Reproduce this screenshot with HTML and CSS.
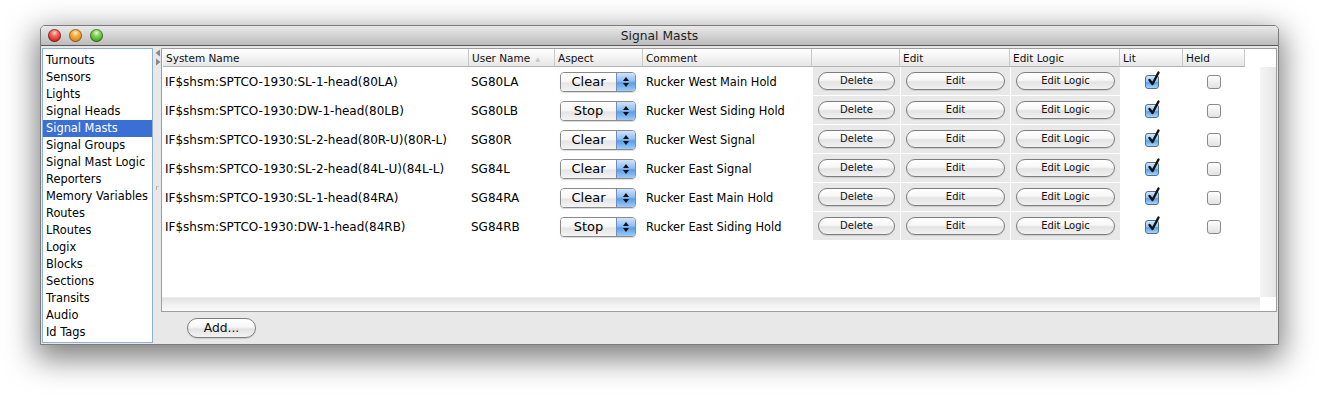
FILE: index.html
```html
<!DOCTYPE html>
<html>
<head>
<meta charset="utf-8">
<title>Signal Masts</title>
<link rel="stylesheet" href="styles.css">
</head>
<body>
<div class="page">
  <div class="window">
    <div class="titlebar">
      <div class="lights">
        <span class="light red"></span>
        <span class="light yellow"></span>
        <span class="light green"></span>
      </div>
      <div class="title">Signal Masts</div>
      <div></div>
    </div>
    <div class="content">
      <ul class="navlist">
        <li>Turnouts</li>
        <li>Sensors</li>
        <li>Lights</li>
        <li>Signal Heads</li>
        <li class="selected">Signal Masts</li>
        <li>Signal Groups</li>
        <li>Signal Mast Logic</li>
        <li>Reporters</li>
        <li>Memory Variables</li>
        <li>Routes</li>
        <li>LRoutes</li>
        <li>Logix</li>
        <li>Blocks</li>
        <li>Sections</li>
        <li>Transits</li>
        <li>Audio</li>
        <li>Id Tags</li>
      </ul>
      <div class="splitter">
        <div class="arrows">
          <svg width="6" height="8" viewBox="0 0 6 8"><path d="M5 0.5 L0.5 4 L5 7.5 Z" fill="#8a8a8a"/></svg>
          <svg width="6" height="8" viewBox="0 0 6 8"><path d="M1 0.5 L5.5 4 L1 7.5 Z" fill="#8a8a8a"/></svg>
        </div>
        <div class="grip"></div>
      </div>
      <div class="mainpane">
        <div class="scrollbox">
          <div class="viewport">
            <div class="tablearea">
              <table class="grid">
                <colgroup>
                  <col class="c-sys"><col class="c-user"><col class="c-aspect"><col class="c-comment">
                  <col class="c-del"><col class="c-edit"><col class="c-logic"><col class="c-lit"><col class="c-held">
                </colgroup>
                <thead>
                  <tr>
                    <th>System Name</th>
                    <th>User Name <span class="sort">&#9650;</span></th>
                    <th>Aspect</th>
                    <th>Comment</th>
                    <th></th>
                    <th>Edit</th>
                    <th>Edit Logic</th>
                    <th>Lit</th>
                    <th>Held</th>
                  </tr>
                </thead>
                <tbody>
                  <tr>
                    <td class="sys">IF$shsm:SPTCO-1930:SL-1-head(80LA)</td>
                    <td class="user">SG80LA</td>
                    <td><div class="combo"><span class="combo-text">Clear</span><span class="combo-arrow"><svg width="8" height="12" viewBox="0 0 8 12"><path d="M4 1 L7 5 L1 5 Z M4 11 L7 7 L1 7 Z" fill="#111"/></svg></span></div></td>
                    <td class="comment">Rucker West Main Hold</td>
                    <td class="btncell"><span class="pill w-del">Delete</span></td>
                    <td class="btncell"><span class="pill w-edit">Edit</span></td>
                    <td class="btncell"><span class="pill w-edit">Edit Logic</span></td>
                    <td class="chk"><span class="cb on"><svg width="18" height="18" viewBox="0 0 18 18"><path d="M4.5 9 L7.5 13 L13.5 1.5" fill="none" stroke="#111" stroke-width="2.4" stroke-linecap="round" stroke-linejoin="round"/></svg></span></td>
                    <td class="chk"><span class="cb"></span></td>
                  </tr>
                  <tr>
                    <td class="sys">IF$shsm:SPTCO-1930:DW-1-head(80LB)</td>
                    <td class="user">SG80LB</td>
                    <td><div class="combo"><span class="combo-text">Stop</span><span class="combo-arrow"><svg width="8" height="12" viewBox="0 0 8 12"><path d="M4 1 L7 5 L1 5 Z M4 11 L7 7 L1 7 Z" fill="#111"/></svg></span></div></td>
                    <td class="comment">Rucker West Siding Hold</td>
                    <td class="btncell"><span class="pill w-del">Delete</span></td>
                    <td class="btncell"><span class="pill w-edit">Edit</span></td>
                    <td class="btncell"><span class="pill w-edit">Edit Logic</span></td>
                    <td class="chk"><span class="cb on"><svg width="18" height="18" viewBox="0 0 18 18"><path d="M4.5 9 L7.5 13 L13.5 1.5" fill="none" stroke="#111" stroke-width="2.4" stroke-linecap="round" stroke-linejoin="round"/></svg></span></td>
                    <td class="chk"><span class="cb"></span></td>
                  </tr>
                  <tr>
                    <td class="sys">IF$shsm:SPTCO-1930:SL-2-head(80R-U)(80R-L)</td>
                    <td class="user">SG80R</td>
                    <td><div class="combo"><span class="combo-text">Clear</span><span class="combo-arrow"><svg width="8" height="12" viewBox="0 0 8 12"><path d="M4 1 L7 5 L1 5 Z M4 11 L7 7 L1 7 Z" fill="#111"/></svg></span></div></td>
                    <td class="comment">Rucker West Signal</td>
                    <td class="btncell"><span class="pill w-del">Delete</span></td>
                    <td class="btncell"><span class="pill w-edit">Edit</span></td>
                    <td class="btncell"><span class="pill w-edit">Edit Logic</span></td>
                    <td class="chk"><span class="cb on"><svg width="18" height="18" viewBox="0 0 18 18"><path d="M4.5 9 L7.5 13 L13.5 1.5" fill="none" stroke="#111" stroke-width="2.4" stroke-linecap="round" stroke-linejoin="round"/></svg></span></td>
                    <td class="chk"><span class="cb"></span></td>
                  </tr>
                  <tr>
                    <td class="sys">IF$shsm:SPTCO-1930:SL-2-head(84L-U)(84L-L)</td>
                    <td class="user">SG84L</td>
                    <td><div class="combo"><span class="combo-text">Clear</span><span class="combo-arrow"><svg width="8" height="12" viewBox="0 0 8 12"><path d="M4 1 L7 5 L1 5 Z M4 11 L7 7 L1 7 Z" fill="#111"/></svg></span></div></td>
                    <td class="comment">Rucker East Signal</td>
                    <td class="btncell"><span class="pill w-del">Delete</span></td>
                    <td class="btncell"><span class="pill w-edit">Edit</span></td>
                    <td class="btncell"><span class="pill w-edit">Edit Logic</span></td>
                    <td class="chk"><span class="cb on"><svg width="18" height="18" viewBox="0 0 18 18"><path d="M4.5 9 L7.5 13 L13.5 1.5" fill="none" stroke="#111" stroke-width="2.4" stroke-linecap="round" stroke-linejoin="round"/></svg></span></td>
                    <td class="chk"><span class="cb"></span></td>
                  </tr>
                  <tr>
                    <td class="sys">IF$shsm:SPTCO-1930:SL-1-head(84RA)</td>
                    <td class="user">SG84RA</td>
                    <td><div class="combo"><span class="combo-text">Clear</span><span class="combo-arrow"><svg width="8" height="12" viewBox="0 0 8 12"><path d="M4 1 L7 5 L1 5 Z M4 11 L7 7 L1 7 Z" fill="#111"/></svg></span></div></td>
                    <td class="comment">Rucker East Main Hold</td>
                    <td class="btncell"><span class="pill w-del">Delete</span></td>
                    <td class="btncell"><span class="pill w-edit">Edit</span></td>
                    <td class="btncell"><span class="pill w-edit">Edit Logic</span></td>
                    <td class="chk"><span class="cb on"><svg width="18" height="18" viewBox="0 0 18 18"><path d="M4.5 9 L7.5 13 L13.5 1.5" fill="none" stroke="#111" stroke-width="2.4" stroke-linecap="round" stroke-linejoin="round"/></svg></span></td>
                    <td class="chk"><span class="cb"></span></td>
                  </tr>
                  <tr>
                    <td class="sys">IF$shsm:SPTCO-1930:DW-1-head(84RB)</td>
                    <td class="user">SG84RB</td>
                    <td><div class="combo"><span class="combo-text">Stop</span><span class="combo-arrow"><svg width="8" height="12" viewBox="0 0 8 12"><path d="M4 1 L7 5 L1 5 Z M4 11 L7 7 L1 7 Z" fill="#111"/></svg></span></div></td>
                    <td class="comment">Rucker East Siding Hold</td>
                    <td class="btncell"><span class="pill w-del">Delete</span></td>
                    <td class="btncell"><span class="pill w-edit">Edit</span></td>
                    <td class="btncell"><span class="pill w-edit">Edit Logic</span></td>
                    <td class="chk"><span class="cb on"><svg width="18" height="18" viewBox="0 0 18 18"><path d="M4.5 9 L7.5 13 L13.5 1.5" fill="none" stroke="#111" stroke-width="2.4" stroke-linecap="round" stroke-linejoin="round"/></svg></span></td>
                    <td class="chk"><span class="cb"></span></td>
                  </tr>
                </tbody>
              </table>
            </div>
            <div class="vgutter"></div>
          </div>
          <div class="hrow">
            <div class="hbar"></div>
            <div class="corner"></div>
          </div>
        </div>
        <div class="footer">
          <span class="pill addbtn">Add...</span>
        </div>
      </div>
    </div>
  </div>
</div>
</body>
</html>
```

FILE: styles.css
```css
* { box-sizing: border-box; }

html, body {
  margin: 0;
  background: #ffffff;
}

body {
  font-family: "DejaVu Sans", "Liberation Sans", sans-serif;
  color: #000;
}

.page {
  height: 400px;
  padding: 25px 0 0 40px;
  overflow: hidden;
}

.window {
  width: 1239px;
  height: 320px;
  border: 1px solid #7b7b7b;
  border-radius: 5px 5px 0 0;
  background: #e8e8e8;
  box-shadow: 0 10px 30px 4px rgba(0, 0, 0, 0.5);
  display: flex;
  flex-direction: column;
  overflow: hidden;
}

/* title bar */
.titlebar {
  height: 20px;
  flex: none;
  display: grid;
  grid-template-columns: 1fr auto 1fr;
  align-items: center;
  background: linear-gradient(#e9e9e9, #d3d3d3 50%, #bcbcbc);
  border-bottom: 1px solid #585858;
}

.lights {
  display: flex;
  gap: 8px;
  padding-left: 7px;
}

.light {
  width: 13px;
  height: 13px;
  border-radius: 50%;
  display: block;
  box-shadow: inset 0 0 0 1px rgba(0, 0, 0, 0.35);
}

.light.red {
  background: radial-gradient(circle at 50% 30%, #ffd1cc 0, #f2675c 30%, #c8241a 75%, #a3180f 100%);
}

.light.yellow {
  background: radial-gradient(circle at 50% 30%, #ffeec0 0, #f4b34a 30%, #d9821a 75%, #b7680d 100%);
}

.light.green {
  background: radial-gradient(circle at 50% 30%, #e0ffc8 0, #86d45e 30%, #3f9e24 75%, #2e7d17 100%);
}

.title {
  font-size: 12.3px;
  color: #1e1e1e;
  text-align: center;
  padding-top: 1px;
}

/* content */
.content {
  flex: 1;
  display: flex;
  padding: 2px 1px 1px 1px;
  min-height: 0;
}

.navlist {
  list-style: none;
  margin: 0;
  padding: 3px 0 0 0;
  width: 111px;
  flex: none;
  background: #fff;
  border: 1px solid #8eb0d6;
}

.navlist li {
  height: 17px;
  line-height: 17px;
  font-size: 11.4px;
  padding-left: 3px;
  white-space: nowrap;
}

.navlist li.selected {
  background: #3a6fd6;
  color: #fff;
}

.splitter {
  width: 8px;
  flex: none;
  display: flex;
  flex-direction: column;
  align-items: center;
  padding-top: 1px;
}

.arrows {
  display: flex;
  flex-direction: column;
  gap: 1px;
  padding-left: 1px;
}

.arrows svg {
  display: block;
}

.grip {
  margin-top: 120px;
  width: 3px;
  height: 4px;
  border-left: 1px solid #b0b0b0;
  border-top: 1px solid #c8c8c8;
}

.mainpane {
  flex: 1;
  display: flex;
  flex-direction: column;
  min-width: 0;
}

.scrollbox {
  height: 264px;
  flex: none;
  background: #fff;
  border: 1px solid #9d9d9d;
  display: flex;
  flex-direction: column;
}

.viewport {
  flex: 1;
  display: flex;
  min-height: 0;
}

.tablearea {
  flex: 1;
  padding-left: 1px;
}

.vgutter {
  width: 16px;
  flex: none;
  margin-top: 18px;
  background: linear-gradient(to right, #f4f4f4, #ececec 60%, #e4e4e4);
}

.hrow {
  height: 14px;
  flex: none;
  display: flex;
}

.hbar {
  flex: 1;
  background: linear-gradient(#e2e2e2, #f1f1f1 50%, #fafafa);
  border-top: 1px solid #ededed;
}

.corner {
  width: 16px;
  background: #fff;
}

/* table */
.grid {
  border-collapse: separate;
  border-spacing: 0;
  table-layout: fixed;
  width: 1082px;
}

.c-sys { width: 306px; }
.c-user { width: 86px; }
.c-aspect { width: 88px; }
.c-comment { width: 169px; }
.c-del { width: 88px; }
.c-edit { width: 110px; }
.c-logic { width: 110px; }
.c-lit { width: 63px; }
.c-held { width: 62px; }

.grid th {
  height: 18px;
  padding: 0 0 0 3px;
  font-size: 10.5px;
  font-weight: normal;
  text-align: left;
  color: #111;
  background: linear-gradient(#ffffff, #f3f3f3 50%, #e6e6e6);
  border-right: 1px solid #c9c9c9;
  border-bottom: 1px solid #b4b4b4;
  white-space: nowrap;
}

.sort {
  font-size: 6px;
  color: #c8c8c8;
  vertical-align: middle;
  padding-left: 2px;
}

.grid td {
  height: 29px;
  padding: 0;
  font-size: 12px;
  white-space: nowrap;
  overflow: hidden;
  vertical-align: middle;
}

.grid td.sys,
.grid td.user {
  padding-left: 2px;
}

.grid td.comment {
  padding-left: 3px;
  font-size: 11.4px;
}

.grid td.btncell {
  background: #e8e8e8;
  border-left: 1px solid #fff;
  border-bottom: 1px solid #fff;
  padding-left: 5px;
}

.grid td.chk {
  text-align: center;
}

/* combo box */
.combo {
  width: 76px;
  height: 20px;
  margin-left: 5px;
  display: flex;
  border: 1px solid #8a8a8a;
  border-radius: 4px;
  overflow: hidden;
  box-shadow: 0 1px 1px rgba(0, 0, 0, 0.15);
}

.combo-text {
  flex: 1;
  text-align: center;
  font-size: 13px;
  line-height: 18px;
  background: linear-gradient(#ffffff, #f6f6f6 50%, #e4e4e4 55%, #f4f4f4);
}

.combo-arrow {
  width: 19px;
  display: flex;
  align-items: center;
  justify-content: center;
  background: linear-gradient(#cfe4fb, #8fbdf0 45%, #5c9de8 55%, #9ccbf7);
  border-left: 1px solid #6f8fc0;
}

.combo-arrow svg {
  display: block;
}

/* pill buttons */
.pill {
  display: inline-block;
  height: 18px;
  line-height: 16px;
  font-size: 10px;
  text-align: center;
  color: #111;
  border: 1px solid #7d7d7d;
  border-radius: 9px;
  background: linear-gradient(#ffffff, #f7f7f7 45%, #e3e3e3 55%, #f2f2f2);
  box-shadow: 0 1px 1px rgba(0, 0, 0, 0.12);
  vertical-align: middle;
}

.w-del { width: 77px; }
.w-edit { width: 99px; }

/* checkboxes */
.cb {
  display: inline-block;
  position: relative;
  width: 14px;
  height: 14px;
  border: 1px solid #8a8a8a;
  border-radius: 3px;
  background: linear-gradient(#ffffff, #f0f0f0 50%, #e2e2e2);
  vertical-align: middle;
}

.cb.on {
  border-color: #4d6d9a;
  background: linear-gradient(#d2e8fd, #8fc3f4 50%, #5aa2e6 55%, #a9d4fa);
}

.cb svg {
  position: absolute;
  left: -1px;
  top: -5px;
  overflow: visible;
}

/* footer */
.footer {
  flex: 1;
  display: flex;
  align-items: center;
  padding-left: 26px;
}

.addbtn {
  width: 69px;
  height: 20px;
  line-height: 18px;
  font-size: 12.3px;
  border-radius: 10px;
}
```
